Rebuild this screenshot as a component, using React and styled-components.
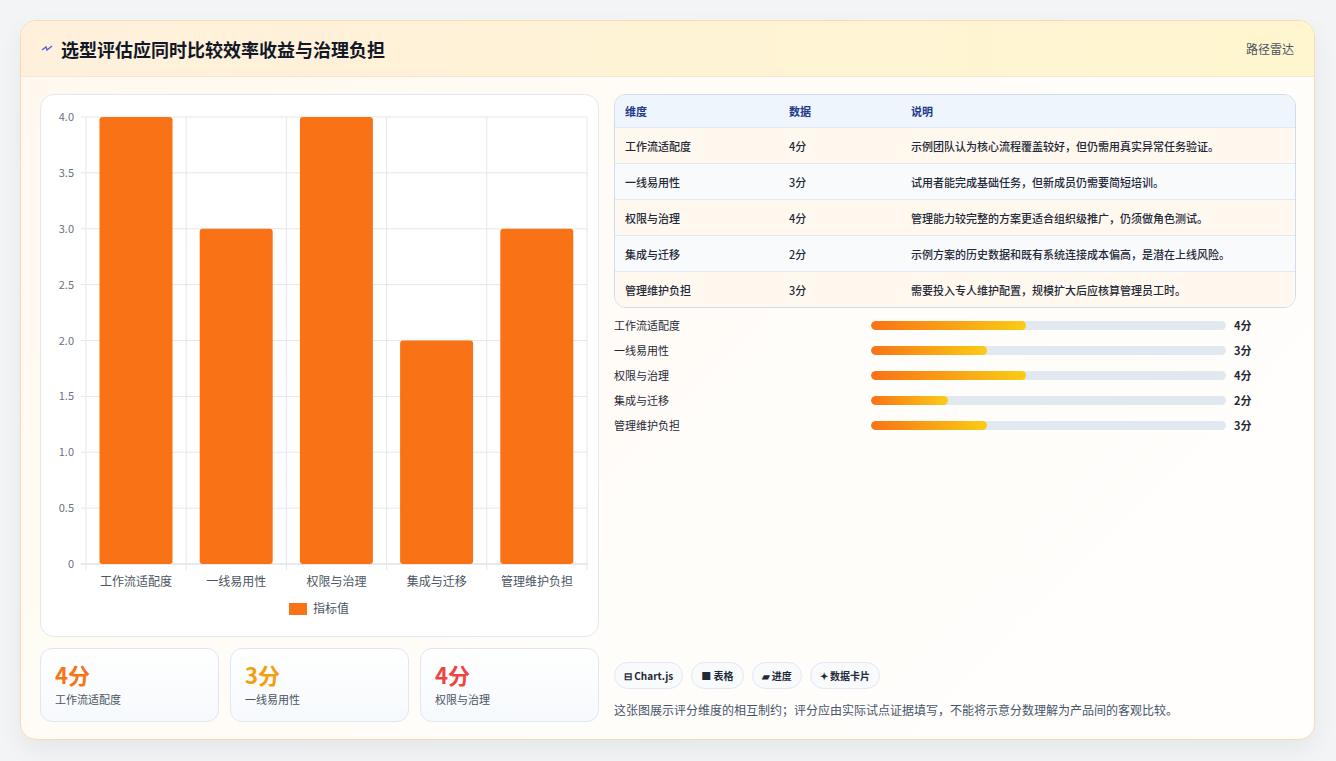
import React from "react";
import styled, { createGlobalStyle } from "styled-components";

const G = createGlobalStyle`
  html,body{margin:0;padding:0;background:#f3f4f6;}
  body{font-family:"Noto Sans CJK SC","Noto Sans",sans-serif;color:#1f2937;}
`;
const Page = styled.div`padding:20px 21px 20px 20px;box-sizing:border-box;height:761px;`;
const Card = styled.div`
  height:720px;box-sizing:border-box;border:1px solid #f6dcb4;border-radius:16px;overflow:hidden;
  background:linear-gradient(135deg,#fff8ef 0%,#fffdfa 60%,#fffefc 100%);
  box-shadow:0 10px 25px rgba(0,0,0,0.06);display:flex;flex-direction:column;
`;
const Header = styled.div`
  height:55px;flex:none;display:flex;align-items:center;justify-content:space-between;padding:0 20px 0 20px;
  background:linear-gradient(90deg,#fff0dc,#fff6cf);border-bottom:1px solid #f5e6cf;
`;
const Title = styled.h1`margin:0;font-size:18px;font-weight:700;color:#111827;display:flex;align-items:center;gap:8px;`;
const Tag = styled.span`font-size:12px;color:#4b5563;`;
const Body = styled.div`flex:1;display:grid;grid-template-columns:559px 1fr;gap:15px;padding:17px 18px 18px 19px;`;
const Col = styled.div`display:flex;flex-direction:column;gap:11px;`;
const ChartBox = styled.div`height:543px;background:#fff;border:1px solid #e5e7eb;border-radius:14px;box-sizing:border-box;`;
const Stats = styled.div`display:grid;grid-template-columns:repeat(3,1fr);gap:11px;`;
const Stat = styled.div`height:74px;box-sizing:border-box;border:1px solid #dfe7f1;border-radius:12px;background:linear-gradient(180deg,#fff,#f6f9fd);padding:10px 14px;`;
const StatV = styled.div`font-size:22px;font-weight:700;color:${p=>p.c};line-height:30px;`;
const StatL = styled.div`font-size:11px;color:#4b5563;margin-top:2px;`;
const Table = styled.div`border:1px solid #cfdcec;border-radius:12px;overflow:hidden;background:#fff;`;
const Row = styled.div`display:grid;grid-template-columns:164px 122px 1fr;height:${p=>p.h}px;align-items:center;padding:0 10px;
  font-size:11px;background:${p=>p.bg};border-top:${p=>p.first?"none":"1px solid #e3e9f1"};color:${p=>p.head?"#1e3a8a":"#1f2937"};font-weight:${p=>p.head?700:500};`;
const Bars = styled.div`display:flex;flex-direction:column;gap:7px;margin-top:8px;flex:1;`;
const BarRow = styled.div`display:grid;grid-template-columns:257px 355px 1fr;align-items:center;height:18px;font-size:11px;`;
const Track = styled.div`height:9px;border-radius:5px;background:#e2e8f0;overflow:hidden;`;
const Fill = styled.div`height:100%;border-radius:5px;background:linear-gradient(90deg,#f97316,#facc15);`;
const Val = styled.span`font-weight:700;padding-left:8px;`;
const Pills = styled.div`display:flex;gap:8px;`;
const Pill = styled.span`height:27px;box-sizing:border-box;padding:0 9px;border:1px solid #e2e8f0;border-radius:14px;background:#f8fafc;
  font-size:10px;font-weight:700;display:inline-flex;align-items:center;gap:3px;color:#1f2937;`;
const Note = styled.p`margin:12px 0 4px;font-size:12px;color:#475569;`;

const dims=[["工作流适配度",4,"示例团队认为核心流程覆盖较好，但仍需用真实异常任务验证。"],["一线易用性",3,"试用者能完成基础任务，但新成员仍需要简短培训。"],["权限与治理",4,"管理能力较完整的方案更适合组织级推广，仍须做角色测试。"],["集成与迁移",2,"示例方案的历史数据和既有系统连接成本偏高，是潜在上线风险。"],["管理维护负担",3,"需要投入专人维护配置，规模扩大后应核算管理员工时。"]];

function Chart(){
  const x0=45,x1=546,y0=22,y1=469;const w=(x1-x0)/5;const f="Noto Sans CJK SC,sans-serif";
  const ticks=[0,0.5,1,1.5,2,2.5,3,3.5,4];
  return <svg width="557" height="541">
    {ticks.map(t=>{const y=y1-(y1-y0)*t/4;return <g key={t}><line x1={x0-5} x2={x1} y1={y} y2={y} stroke={t===0?"#cbd5e1":"#e5e7eb"}/>
      <text x={x0-12} y={y+4} fontSize="11" textAnchor="end" fill="#6b7280" fontFamily={f}>{t===0?"0":t.toFixed(1)}</text></g>})}
    {[0,1,2,3,4,5].map(i=><line key={i} x1={x0+i*w} x2={x0+i*w} y1={y0} y2={y1+6} stroke="#e5e7eb"/>)}
    {dims.map((d,i)=>{const h=(y1-y0)*d[1]/4;return <g key={i}>
      <rect x={x0+i*w+13.5} y={y1-h} width={73} height={h} rx="3" fill="#f97316"/>
      <text x={x0+i*w+w/2} y={y1+22} fontSize="12" textAnchor="middle" fill="#4b5563" fontFamily={f}>{d[0]}</text></g>})}
    <rect x="248" y="508" width="18" height="12" fill="#f97316"/>
    <text x="272" y="518" fontSize="12" fill="#4b5563" fontFamily={f}>指标值</text>
  </svg>;
}

export default function App(){
  return <Page><G/><Card>
    <Header><Title><svg width="12" height="10" viewBox="0 0 12 10"><path d="M1 6 L5 3 L6 6 L11 2" stroke="#4f6bd8" strokeWidth="1.4" fill="none"/></svg>选型评估应同时比较效率收益与治理负担</Title><Tag>路径雷达</Tag></Header>
    <Body>
      <Col>
        <ChartBox><Chart/></ChartBox>
        <Stats>
          <Stat><StatV c="#f97316">4分</StatV><StatL>工作流适配度</StatL></Stat>
          <Stat><StatV c="#f59e0b">3分</StatV><StatL>一线易用性</StatL></Stat>
          <Stat><StatV c="#ef4444">4分</StatV><StatL>权限与治理</StatL></Stat>
        </Stats>
      </Col>
      <Col style={{gap:0}}>
        <Table>
          <Row head first h={32} bg="#eef5fd"><span>维度</span><span>数据</span><span>说明</span></Row>
          {dims.map((d,i)=><Row key={i} h={35} bg={i%2?"#f8fafc":"#fef8ef"}><span>{d[0]}</span><span>{d[1]}分</span><span>{d[2]}</span></Row>)}
        </Table>
        <Bars>
          {dims.map((d,i)=><BarRow key={i}><span>{d[0]}</span><Track><Fill style={{width:`${d[1]*10.9}%`}}/></Track><Val>{d[1]}分</Val></BarRow>)}
        </Bars>
        <Pills><Pill>⊟ Chart.js</Pill><Pill>■ 表格</Pill><Pill>▰ 进度</Pill><Pill>✦ 数据卡片</Pill></Pills>
        <Note>这张图展示评分维度的相互制约；评分应由实际试点证据填写，不能将示意分数理解为产品间的客观比较。</Note>
      </Col>
    </Body>
  </Card></Page>;
}
